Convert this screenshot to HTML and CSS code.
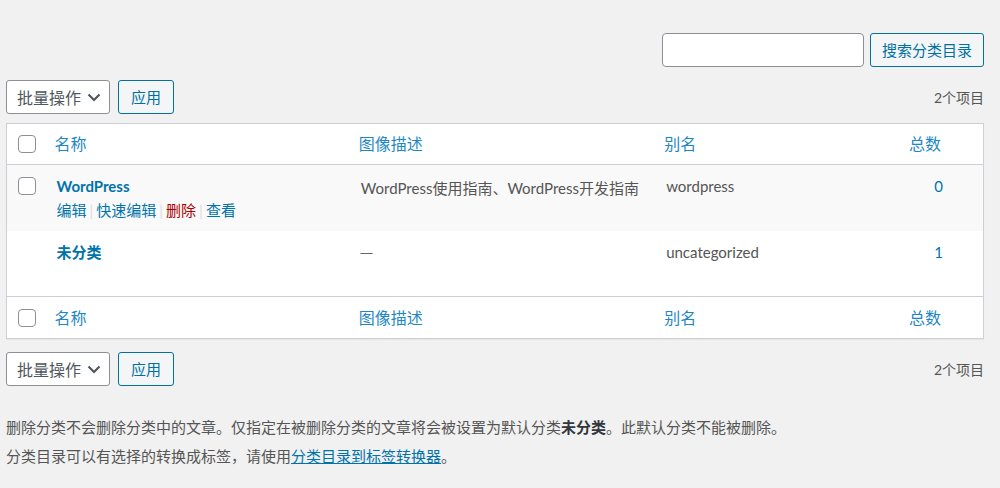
FILE: index.html
```html
<!DOCTYPE html>
<html lang="zh-CN">
<head>
    <meta charset="UTF-8">
    <meta name="viewport" content="width=device-width, initial-scale=1.0">
    <title>分类目录</title>
    <link rel="stylesheet" href="styles.css">
</head>
<body>
    <div class="wrap">
        <form class="search-box">
            <input type="search" class="search-input">
            <button type="button" class="button search-button">搜索分类目录</button>
        </form>

        <div class="tablenav">
            <div class="bulkactions">
                <div class="select-wrap">
                    <select class="bulk-select">
                        <option>批量操作</option>
                    </select>
                    <svg class="chevron" width="14" height="9" viewBox="0 0 14 9">
                        <path d="M1.5 1.5 L7 7 L12.5 1.5" fill="none" stroke="#50575e" stroke-width="2.2"/>
                    </svg>
                </div>
                <button type="button" class="button">应用</button>
            </div>
            <span class="displaying-num">2个项目</span>
        </div>

        <table class="list-table">
            <colgroup>
                <col class="col-cb">
                <col class="col-name">
                <col class="col-desc">
                <col class="col-slug">
                <col class="col-posts">
            </colgroup>
            <thead>
                <tr>
                    <td class="check-column"><input type="checkbox" class="cb"></td>
                    <th><a href="#">名称</a></th>
                    <th><a href="#">图像描述</a></th>
                    <th><a href="#">别名</a></th>
                    <th class="num"><a href="#">总数</a></th>
                </tr>
            </thead>
            <tbody>
                <tr class="alternate">
                    <td class="check-column"><input type="checkbox" class="cb"></td>
                    <td>
                        <strong><a href="#" class="row-title">WordPress</a></strong>
                        <div class="row-actions">
                            <a href="#">编辑</a><span class="sep">|</span><a href="#">快速编辑</a><span class="sep">|</span><a href="#" class="delete">删除</a><span class="sep">|</span><a href="#">查看</a>
                        </div>
                    </td>
                    <td class="desc">WordPress使用指南、WordPress开发指南</td>
                    <td>wordpress</td>
                    <td class="num"><a href="#">0</a></td>
                </tr>
                <tr>
                    <td class="check-column"></td>
                    <td><strong><a href="#" class="row-title">未分类</a></strong></td>
                    <td class="empty-desc">—</td>
                    <td>uncategorized</td>
                    <td class="num"><a href="#">1</a></td>
                </tr>
            </tbody>
            <tfoot>
                <tr>
                    <td class="check-column"><input type="checkbox" class="cb"></td>
                    <th><a href="#">名称</a></th>
                    <th><a href="#">图像描述</a></th>
                    <th><a href="#">别名</a></th>
                    <th class="num"><a href="#">总数</a></th>
                </tr>
            </tfoot>
        </table>

        <div class="tablenav bottom">
            <div class="bulkactions">
                <div class="select-wrap">
                    <select class="bulk-select">
                        <option>批量操作</option>
                    </select>
                    <svg class="chevron" width="14" height="9" viewBox="0 0 14 9">
                        <path d="M1.5 1.5 L7 7 L12.5 1.5" fill="none" stroke="#50575e" stroke-width="2.2"/>
                    </svg>
                </div>
                <button type="button" class="button">应用</button>
            </div>
            <span class="displaying-num">2个项目</span>
        </div>

        <div class="form-wrap">
            <p>删除分类不会删除分类中的文章。仅指定在被删除分类的文章将会被设置为默认分类<strong>未分类</strong>。此默认分类不能被删除。</p>
            <p>分类目录可以有选择的转换成标签，请使用<a href="#" class="converter">分类目录到标签转换器</a>。</p>
        </div>
    </div>
</body>
</html>
```

FILE: styles.css
```css
body {
    margin: 0;
    background: #f1f1f1;
    color: #555;
    font-family: Lato, "Noto Sans CJK SC", sans-serif;
    font-size: 15px;
}
a {
    color: #0073aa;
    text-decoration: none;
}
.wrap {
    padding: 33px 16px 0 6px;
}
.search-box {
    display: flex;
    justify-content: flex-end;
    gap: 6px;
    margin: 0;
}
.search-input {
    width: 202px;
    height: 34px;
    box-sizing: border-box;
    border: 1px solid #8c8f94;
    border-radius: 4px;
    background: #fff;
    margin: 0;
}
.button {
    height: 34px;
    box-sizing: border-box;
    padding: 0 11px;
    border: 1px solid #0071a1;
    border-radius: 3px;
    background: #f3f5f6;
    color: #0071a1;
    font-family: inherit;
    font-size: 15px;
    line-height: 32px;
}
.tablenav {
    display: flex;
    align-items: center;
    height: 34px;
    margin-top: 13px;
}
.bulkactions {
    display: flex;
    gap: 8px;
}
.bulkactions .button {
    width: 56px;
    padding: 0;
}
.select-wrap {
    position: relative;
}
.bulk-select {
    appearance: none;
    -webkit-appearance: none;
    width: 104px;
    height: 34px;
    padding: 0 0 0 10px;
    border: 1px solid #8c8f94;
    border-radius: 3px;
    background: #fff;
    color: #50575e;
    font-family: inherit;
    font-size: 16px;
}
.chevron {
    position: absolute;
    left: 81px;
    top: 13px;
    pointer-events: none;
}
.displaying-num {
    margin-left: auto;
    font-size: 14px;
    color: #555;
}
.list-table {
    width: 978px;
    margin-top: 9px;
    border-collapse: collapse;
    table-layout: fixed;
    border: 1px solid #ccd0d4;
    background: #fff;
    box-shadow: 0 1px 1px rgba(0, 0, 0, 0.04);
}
.col-cb { width: 39px; }
.col-name { width: 304px; }
.col-desc { width: 305px; }
.col-slug { width: 247px; }
.col-posts { width: 81px; }

.list-table thead tr {
    border-bottom: 1px solid #ccd0d4;
}
.list-table tfoot tr {
    border-top: 1px solid #ccd0d4;
}
.list-table th,
.list-table thead td,
.list-table tfoot td {
    height: 41px;
    box-sizing: border-box;
    padding: 0 8px 0 9px;
    text-align: left;
    font-weight: normal;
    font-size: 16px;
    line-height: 24px;
    vertical-align: middle;
    white-space: nowrap;
}
.list-table tfoot th,
.list-table tfoot td {
    height: 42px;
}
.list-table th a {
    color: #1e87c4;
}
.list-table th.num {
    text-align: right;
    padding: 0 42px 0 0;
}
.list-table tbody td {
    height: 66px;
    box-sizing: border-box;
    padding: 11px 8px 0 11px;
    vertical-align: top;
    line-height: 20px;
}
.list-table tbody td.desc {
    padding-top: 13px;
}
.list-table tbody td.empty-desc {
    padding-left: 10px;
    font-family: "Noto Sans CJK SC", sans-serif;
    color: #666;
}
.list-table tbody tr.alternate {
    background: #f9f9f9;
}
.list-table tbody td.num {
    text-align: right;
    padding-right: 40px;
}
.list-table .check-column {
    padding: 0 0 0 11px;
}
.list-table tbody .check-column {
    padding-top: 12px;
}
.cb {
    appearance: none;
    -webkit-appearance: none;
    display: block;
    width: 18px;
    height: 18px;
    margin: 0;
    border: 1px solid #8c8f94;
    border-radius: 4px;
    background: #fff;
}
.row-title {
    font-weight: 700;
    color: #0073aa;
}
.row-actions {
    padding-top: 4px;
}
.row-actions .sep {
    color: #ddd;
    margin: 0 3px;
}
.row-actions .delete {
    color: #a00;
}
.tablenav.bottom {
    margin-top: 13px;
}
.form-wrap {
    margin-top: 27px;
}
.form-wrap p {
    margin: 0;
    line-height: 29px;
}
.form-wrap strong {
    color: #32373c;
}
.converter {
    text-decoration: underline;
}
```
